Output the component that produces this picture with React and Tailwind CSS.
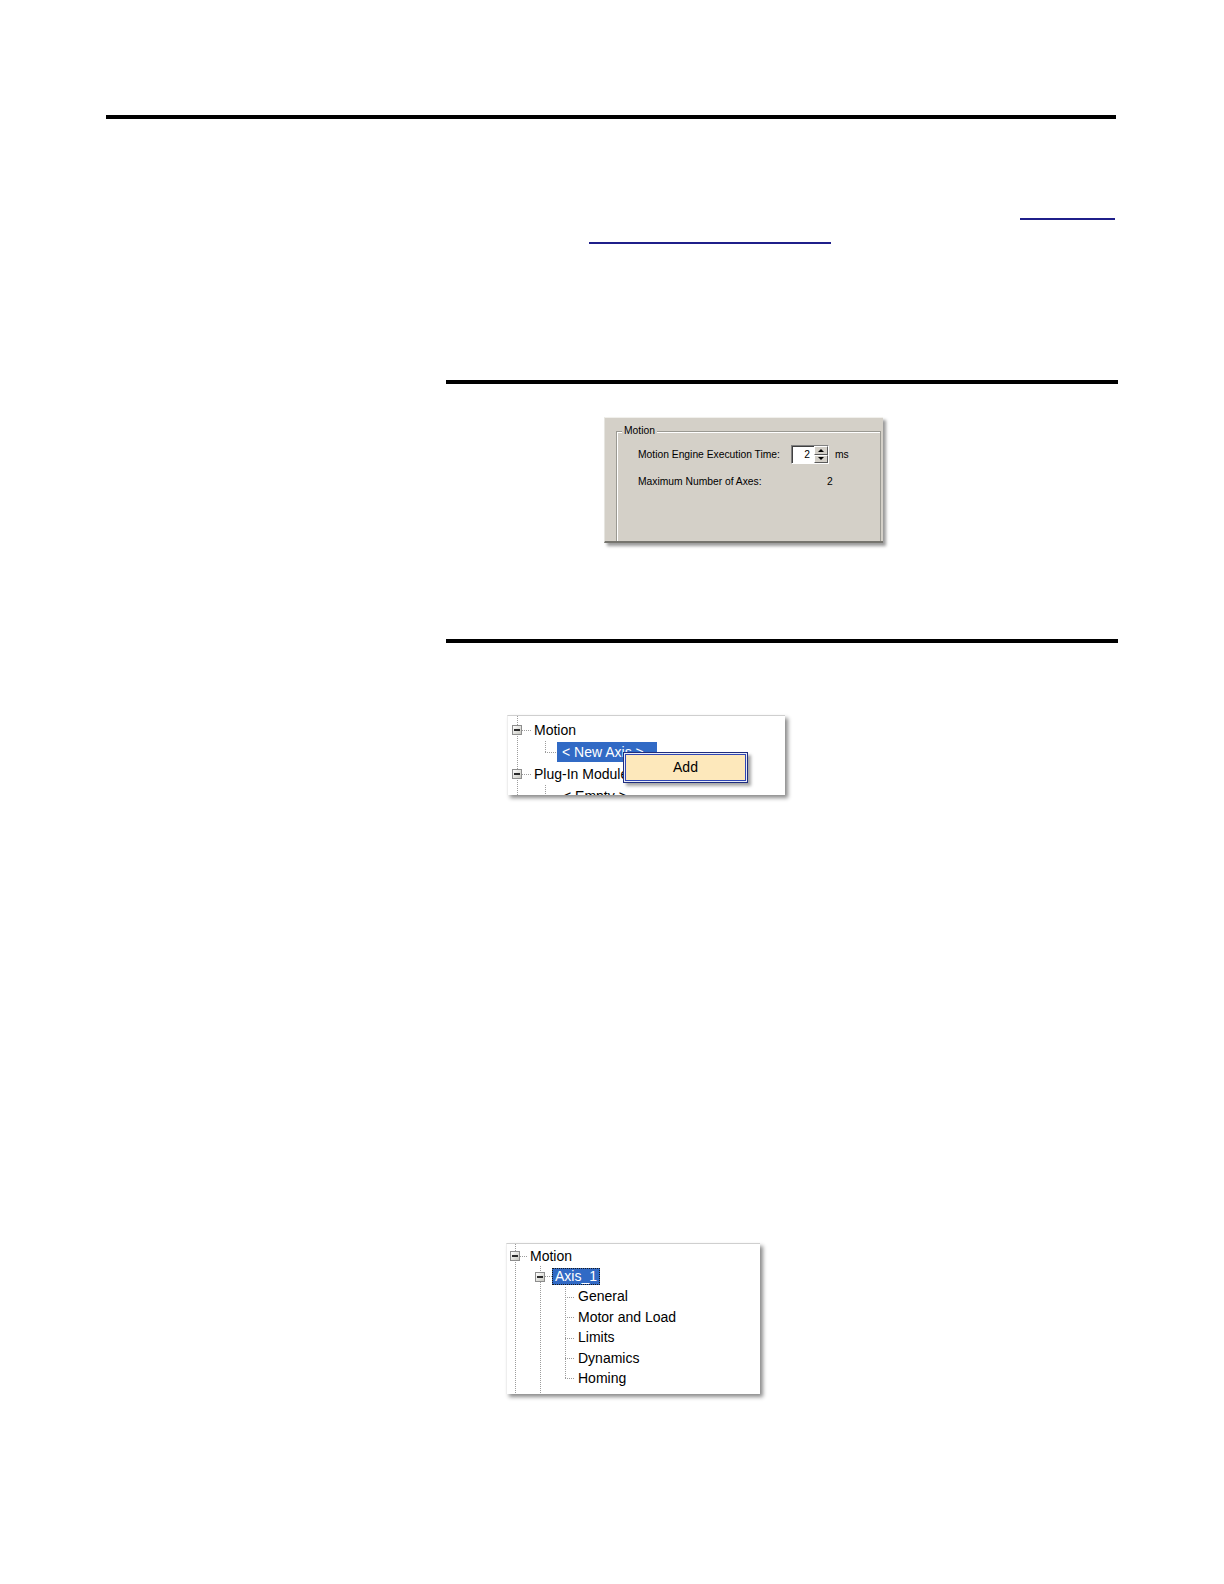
import React from "react";

function MinusBox() {
  return (
    <div className="relative w-[10px] h-[10px] shrink-0 border border-[#8d8d8d] bg-gradient-to-br from-white to-[#c9c9c2] flex items-center justify-center">
      <div className="w-[6px] h-[2px] bg-[#2a2a2a]" />
    </div>
  );
}

function SpinBtn({ up }) {
  return (
    <div className="h-[8.5px] w-[14px] bg-[#d4d0c8] border border-t-white border-l-white border-r-[#5a5a5a] border-b-[#5a5a5a] flex items-center justify-center">
      {up ? (
        <div className="w-0 h-0 border-x-[3px] border-x-transparent border-b-[3px] border-b-black" />
      ) : (
        <div className="w-0 h-0 border-x-[3px] border-x-transparent border-t-[3px] border-t-black" />
      )}
    </div>
  );
}

function MotionPanel() {
  return (
    <div className="mt-[33px] ml-[604px] w-[279px] h-[126px] bg-[#d4d0c8] border-t border-l border-b-2 border-t-[#f1f0ec] border-l-[#e6e5e0] border-b-[#76756f] shadow-[3px_3px_3px_rgba(0,0,0,0.4)] flex flex-col pl-[11px] pt-[13px] text-[10.3px]">
      <div className="relative flex-1 w-[265px] border-t border-l border-r border-[#9a9992] shadow-[inset_1px_1px_0_#ffffff]">
        <span className="absolute left-[5px] top-[-7px] px-[2px] bg-[#d4d0c8] leading-[12px]">Motion</span>
        <div className="mt-[13px] pl-[21px] flex items-center h-[19px]">
          <span className="w-[153px] whitespace-nowrap">Motion Engine Execution Time:</span>
          <div className="w-[38px] h-[19px] flex border border-t-[#808080] border-l-[#808080] border-b-white border-r-white bg-white shadow-[inset_1px_1px_0_#404040]">
            <div className="flex-1 text-right pr-[4px] leading-[17px]">2</div>
            <div className="w-[14px] flex flex-col">
              <SpinBtn up />
              <SpinBtn />
            </div>
          </div>
          <span className="ml-[6px]">ms</span>
        </div>
        <div className="mt-[11px] pl-[21px] flex items-center h-[14px]">
          <span className="w-[189px] whitespace-nowrap">Maximum Number of Axes:</span>
          <span>2</span>
        </div>
      </div>
    </div>
  );
}

const dot = { stroke: "#9c9c9c", strokeWidth: 1, strokeDasharray: "1 1", shapeRendering: "crispEdges" };

function AddPanel() {
  return (
    <div className="mt-[72px] ml-[507px] w-[278px] h-[80px] relative bg-white border-t border-l border-t-[#cfcfcf] border-l-[#eeeeee] shadow-[3px_3px_4px_rgba(0,0,0,0.45)] overflow-hidden text-[14px]">
      <svg className="absolute inset-0" width="277" height="79">
        <line x1="9.5" y1="0" x2="9.5" y2="80" style={dot} />
        <line x1="14" y1="14.5" x2="24" y2="14.5" style={dot} />
        <line x1="37.5" y1="25" x2="37.5" y2="36" style={dot} />
        <line x1="37" y1="36.5" x2="49" y2="36.5" style={dot} />
        <line x1="14" y1="58.5" x2="24" y2="58.5" style={dot} />
        <line x1="37.5" y1="69" x2="37.5" y2="80" style={dot} />
      </svg>
      <div className="relative pt-[3px] flex flex-col">
        <div className="h-[22px] pl-[4px] flex items-center">
          <MinusBox />
          <span className="ml-[12px]">Motion</span>
        </div>
        <div className="h-[22px] pl-[49px] flex items-center">
          <div className="w-[100px] h-[20px] bg-[#316ac5] text-white pl-[5px] flex items-center whitespace-nowrap">
            {"< New Axis >"}
          </div>
        </div>
        <div className="h-[22px] pl-[4px] flex items-center">
          <MinusBox />
          <span className="ml-[12px] whitespace-nowrap">Plug-In Modules</span>
        </div>
        <div className="h-[22px] pl-[55px] flex items-center whitespace-nowrap">{"< Empty >"}</div>
      </div>
      <div className="absolute left-[115px] top-[36px] w-[125px] h-[31px] border border-[#1f2d7e] bg-[#e9ecf7] p-[1px] shadow-[3px_3px_3px_rgba(0,0,0,0.35)]">
        <div className="w-full h-full border border-[#2f46b4] bg-[#fde8bb] flex items-center justify-center">
          Add
        </div>
      </div>
    </div>
  );
}

function AxisPanel() {
  const rows = ["General", "Motor and Load", "Limits", "Dynamics", "Homing"];
  return (
    <div className="mt-[448px] ml-[506px] w-[254px] h-[151px] relative bg-white border-t border-l border-t-[#cfcfcf] border-l-[#eeeeee] shadow-[3px_3px_4px_rgba(0,0,0,0.45)] overflow-hidden text-[14px]">
      <svg className="absolute inset-0" width="253" height="150">
        <line x1="8.5" y1="0" x2="8.5" y2="151" style={dot} />
        <line x1="13" y1="12.5" x2="20" y2="12.5" style={dot} />
        <line x1="33.5" y1="22" x2="33.5" y2="151" style={dot} />
        <line x1="38" y1="32.5" x2="45" y2="32.5" style={dot} />
        <line x1="58.5" y1="43" x2="58.5" y2="135" style={dot} />
        <line x1="58" y1="53.5" x2="68" y2="53.5" style={dot} />
        <line x1="58" y1="73.5" x2="68" y2="73.5" style={dot} />
        <line x1="58" y1="94.5" x2="68" y2="94.5" style={dot} />
        <line x1="58" y1="114.5" x2="68" y2="114.5" style={dot} />
        <line x1="58" y1="134.5" x2="68" y2="134.5" style={dot} />
      </svg>
      <div className="relative pt-[2px] flex flex-col">
        <div className="h-[20.4px] pl-[3px] flex items-center">
          <MinusBox />
          <span className="ml-[10px]">Motion</span>
        </div>
        <div className="h-[20.4px] pl-[28px] flex items-center">
          <MinusBox />
          <div className="ml-[7px] h-[17px] px-[2px] border border-dotted border-[#1a1a1a] bg-[#316ac5] text-white flex items-center whitespace-nowrap">
            Axis_1
          </div>
        </div>
        {rows.map((r) => (
          <div key={r} className="h-[20.4px] pl-[71px] flex items-center whitespace-nowrap">
            {r}
          </div>
        ))}
      </div>
    </div>
  );
}

export default function App() {
  return (
    <div className="w-[1224px] h-[1584px] bg-white overflow-hidden flex flex-col items-start font-['Liberation_Sans',Arial,sans-serif] text-black">
      <div className="mt-[115px] ml-[106px] w-[1010px] h-[4px] bg-black shrink-0" />
      <div className="mt-[99px] ml-[1020px] w-[95px] h-[2px] bg-[#1f1f8a] shrink-0" />
      <div className="mt-[22px] ml-[589px] w-[242px] h-[2px] bg-[#1f1f8a] shrink-0" />
      <div className="mt-[136px] ml-[446px] w-[672px] h-[4px] bg-black shrink-0" />
      <MotionPanel />
      <div className="mt-[96px] ml-[446px] w-[672px] h-[4px] bg-black shrink-0" />
      <AddPanel />
      <AxisPanel />
    </div>
  );
}
